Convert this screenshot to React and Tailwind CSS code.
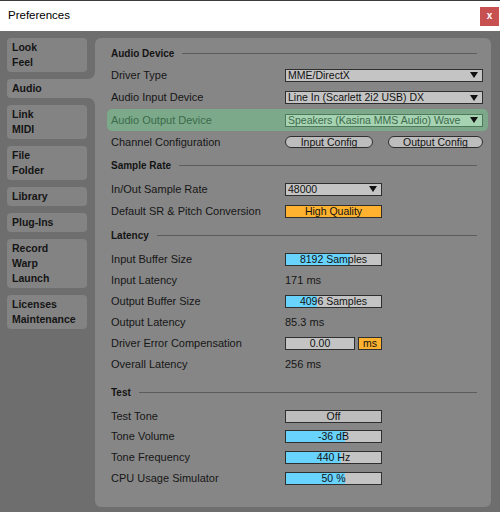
import React from 'react';

const tabs = [
  { lines: ['Look', 'Feel'] },
  { lines: ['Audio'], active: true },
  { lines: ['Link', 'MIDI'] },
  { lines: ['File', 'Folder'] },
  { lines: ['Library'] },
  { lines: ['Plug-Ins'] },
  { lines: ['Record', 'Warp', 'Launch'] },
  { lines: ['Licenses', 'Maintenance'] },
];

function Arrow() {
  return (
    <svg width="8" height="6" viewBox="0 0 8 6" className="ml-auto mr-[4px] shrink-0">
      <polygon points="0,0 8,0 4,6" fill="#111" />
    </svg>
  );
}

function Dropdown({ value, w, green }) {
  return (
    <div className={`flex h-[13px] items-center border pl-[2px] text-[10.5px] leading-none ${w} ${green ? 'border-[#4e7a5b] bg-[#a6d3b2] text-[#3d6a4b]' : 'border-[#2f2f2f] bg-[#c4c4c4] text-[#111]'}`}>
      <span className="whitespace-nowrap">{value}</span>
      <Arrow />
    </div>
  );
}

function Box({ value, fill = 0, bg = 'bg-[#c4c4c4]', w = 'w-[97px]' }) {
  return (
    <div className={`relative flex h-[13px] items-center justify-center border border-[#2f2f2f] text-[10.5px] leading-none text-[#111] ${bg} ${w}`}>
      {fill > 0 && <div className="absolute inset-y-0 left-0 bg-[#68d3fd]" style={{ width: `${fill}%` }} />}
      <span className="relative">{value}</span>
    </div>
  );
}

function Pill({ label, w }) {
  return (
    <div className={`flex h-[12px] items-center justify-center rounded-full border border-[#2f2f2f] bg-[#bdbdbd] text-[10.5px] leading-none text-[#111] ${w}`}>
      {label}
    </div>
  );
}

function Header({ title, h, mt = '' }) {
  return (
    <div className={`flex items-center gap-[8px] pr-[6px] ${h} ${mt}`}>
      <span className="text-[10px] font-bold text-[#141414]">{title}</span>
      <div className="h-px flex-1 bg-[#5c5c5c]" />
    </div>
  );
}

function Row({ label, h, children, green }) {
  return (
    <div className={`flex items-center ${h} ${green ? '-ml-[4px] -mr-[5px] rounded-[5px] bg-[#7ba98a] pl-[4px] pr-[5px]' : ''}`}>
      <div className={`w-[174px] shrink-0 ${green ? 'text-[#3d6a4b]' : 'text-[#161616]'}`}>{label}</div>
      {children}
    </div>
  );
}

export default function App() {
  return (
    <div className="flex h-[512px] w-[500px] flex-col overflow-hidden bg-[#6e6e6e] text-[11px]" style={{ fontFamily: '"Liberation Sans", Arial, sans-serif' }}>
      <div className="flex h-[31px] shrink-0 items-center border-t border-[#3a3a3a] bg-white pl-[8px] pr-[1px]">
        <span className="text-[11.5px] text-black">Preferences</span>
        <div className="ml-auto flex h-[19px] w-[19px] items-center justify-center bg-[#c75050] text-[10px] font-bold leading-none text-white">x</div>
      </div>

      <div className="flex flex-1 pl-[7px] pt-[7px] pb-[5px] pr-[9px]">
        <div className="flex w-[88px] shrink-0 flex-col gap-[7px]">
          {tabs.map((t) => (
            <div
              key={t.lines[0]}
              className={`relative flex flex-col py-[2px] pl-[5px] text-[10.5px] font-bold leading-[15px] text-[#151515] ${t.active ? 'w-[88px] rounded-l-[4px] bg-[#868686]' : 'w-[80px] rounded-[4px] bg-[#838383]'}`}
            >
              {t.lines.map((l) => (
                <span key={l}>{l}</span>
              ))}
              {t.active && (
                <>
                  <div className="absolute -top-[7px] right-0 h-[7px] w-[8px] bg-[#868686]">
                    <div className="h-full w-full rounded-br-[7px] bg-[#6e6e6e]" />
                  </div>
                  <div className="absolute -bottom-[7px] right-0 h-[7px] w-[8px] bg-[#868686]">
                    <div className="h-full w-full rounded-tr-[7px] bg-[#6e6e6e]" />
                  </div>
                </>
              )}
            </div>
          ))}
        </div>

        <div className="flex flex-1 flex-col rounded-[6px] bg-[#868686] pl-[16px] pr-[8px] pt-[4px]">
          <Header title="Audio Device" h="h-[22px]" />
          <Row label="Driver Type" h="h-[22px]">
            <Dropdown value="MME/DirectX" w="w-[198px]" />
          </Row>
          <Row label="Audio Input Device" h="h-[23px]">
            <Dropdown value="Line In (Scarlett 2i2 USB) DX" w="w-[198px]" />
          </Row>
          <Row label="Audio Output Device" h="h-[22px]" green>
            <Dropdown value="Speakers (Kasina MMS Audio) Wave" w="w-[198px]" green />
          </Row>
          <Row label="Channel Configuration" h="h-[22px]">
            <div className="flex gap-[15px]">
              <Pill label="Input Config" w="w-[88px]" />
              <Pill label="Output Config" w="w-[95px]" />
            </div>
          </Row>

          <Header title="Sample Rate" h="h-[25px]" />
          <Row label="In/Out Sample Rate" h="h-[22px]">
            <Dropdown value="48000" w="w-[97px]" />
          </Row>
          <Row label="Default SR & Pitch Conversion" h="h-[23px]">
            <Box value="High Quality" bg="bg-[#ffb22f]" />
          </Row>

          <Header title="Latency" h="h-[25px]" />
          <Row label="Input Buffer Size" h="h-[22px]">
            <Box value="8192 Samples" fill={67} />
          </Row>
          <Row label="Input Latency" h="h-[21px]">
            <span className="text-[#161616]">171 ms</span>
          </Row>
          <Row label="Output Buffer Size" h="h-[21px]">
            <Box value="4096 Samples" fill={33} />
          </Row>
          <Row label="Output Latency" h="h-[21px]">
            <span className="text-[#161616]">85.3 ms</span>
          </Row>
          <Row label="Driver Error Compensation" h="h-[21px]">
            <div className="flex gap-[3px]">
              <Box value="0.00" w="w-[70px]" />
              <Box value="ms" w="w-[24px]" bg="bg-[#ffb22f]" />
            </div>
          </Row>
          <Row label="Overall Latency" h="h-[21px]">
            <span className="text-[#161616]">256 ms</span>
          </Row>

          <Header title="Test" h="h-[28px]" mt="mt-[3px]" />
          <Row label="Test Tone" h="h-[20px]">
            <Box value="Off" bg="bg-[#bdbdbd]" />
          </Row>
          <Row label="Tone Volume" h="h-[21px]">
            <Box value="-36 dB" fill={62} />
          </Row>
          <Row label="Tone Frequency" h="h-[21px]">
            <Box value="440 Hz" fill={58} />
          </Row>
          <Row label="CPU Usage Simulator" h="h-[21px]">
            <Box value="50 %" fill={62} />
          </Row>
        </div>
      </div>
    </div>
  );
}
